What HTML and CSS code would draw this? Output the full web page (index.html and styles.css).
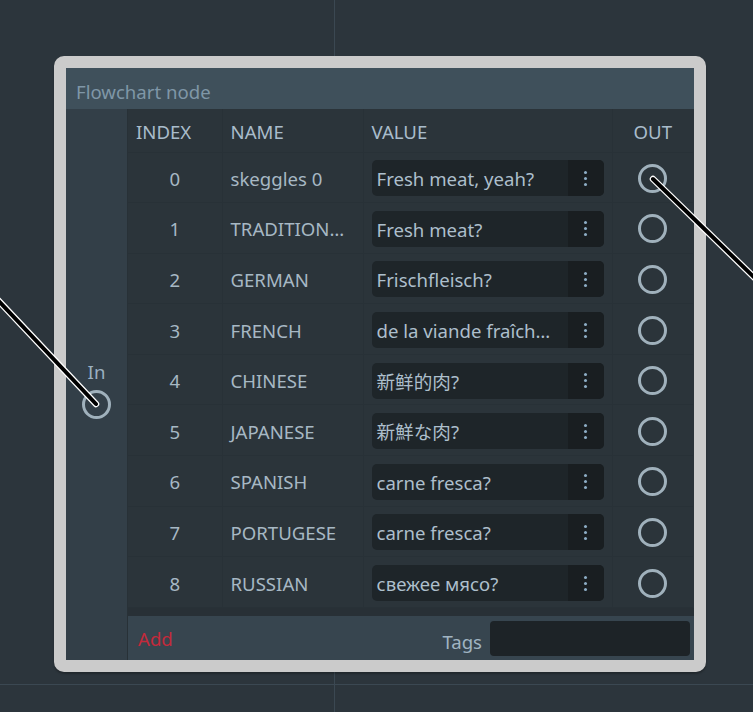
FILE: index.html
```html
<!DOCTYPE html>
<html lang="en">
<head>
  <meta charset="UTF-8">
  <title>Flowchart node</title>
  <link rel="stylesheet" href="styles.css">
</head>
<body>
<div class="canvas">

  <!-- Node -->
  <div class="node">
    <div class="node-title">Flowchart node</div>
    <div class="node-body">
      <div class="inputs">
        <div class="port-label">In</div>
        <div class="port"></div>
      </div>
      <div class="outputs">
        <table class="rows">
          <colgroup>
            <col class="c-index"><col class="c-name"><col class="c-value"><col class="c-out">
          </colgroup>
          <thead>
            <tr><th>INDEX</th><th>NAME</th><th>VALUE</th><th class="out">OUT</th></tr>
          </thead>
          <tbody>
            <tr><td class="idx">0</td><td class="name">skeggles 0</td><td><div class="value"><span>Fresh meat, yeah?</span><div class="dots"><i></i><i></i><i></i></div></div></td><td class="out"><div class="port"></div></td></tr>
            <tr><td class="idx">1</td><td class="name">TRADITIONAL CHINESE</td><td><div class="value"><span>Fresh meat?</span><div class="dots"><i></i><i></i><i></i></div></div></td><td class="out"><div class="port"></div></td></tr>
            <tr><td class="idx">2</td><td class="name">GERMAN</td><td><div class="value"><span>Frischfleisch?</span><div class="dots"><i></i><i></i><i></i></div></div></td><td class="out"><div class="port"></div></td></tr>
            <tr><td class="idx">3</td><td class="name">FRENCH</td><td><div class="value"><span>de la viande fraîche?</span><div class="dots"><i></i><i></i><i></i></div></div></td><td class="out"><div class="port"></div></td></tr>
            <tr><td class="idx">4</td><td class="name">CHINESE</td><td><div class="value"><span class="sc">新鲜的肉?</span><div class="dots"><i></i><i></i><i></i></div></div></td><td class="out"><div class="port"></div></td></tr>
            <tr><td class="idx">5</td><td class="name">JAPANESE</td><td><div class="value"><span class="jp">新鮮な肉?</span><div class="dots"><i></i><i></i><i></i></div></div></td><td class="out"><div class="port"></div></td></tr>
            <tr><td class="idx">6</td><td class="name">SPANISH</td><td><div class="value"><span>carne fresca?</span><div class="dots"><i></i><i></i><i></i></div></div></td><td class="out"><div class="port"></div></td></tr>
            <tr><td class="idx">7</td><td class="name">PORTUGESE</td><td><div class="value"><span>carne fresca?</span><div class="dots"><i></i><i></i><i></i></div></div></td><td class="out"><div class="port"></div></td></tr>
            <tr><td class="idx">8</td><td class="name">RUSSIAN</td><td><div class="value"><span>свежее мясо?</span><div class="dots"><i></i><i></i><i></i></div></div></td><td class="out"><div class="port"></div></td></tr>
          </tbody>
        </table>
        <div class="table-end"></div>
        <div class="footer">
          <span class="add">Add</span>
          <label class="tags">Tags <input type="text"></label>
        </div>
      </div>
    </div>
  </div>

  <!-- Wires -->
  <svg class="wires" width="753" height="712" viewBox="0 0 753 712">
    <g stroke="#fff" stroke-width="6.5" stroke-linecap="round">
      <line x1="-5" y1="297" x2="96" y2="404"/>
      <line x1="653" y1="179" x2="760" y2="283"/>
    </g>
    <g stroke="#000" stroke-width="4" stroke-linecap="round">
      <line x1="-5" y1="297" x2="96" y2="404"/>
      <line x1="653" y1="179" x2="760" y2="283"/>
    </g>
  </svg>
</div>
</body>
</html>
```

FILE: styles.css
```css
* { margin: 0; padding: 0; box-sizing: border-box; }
body {
  background: #2c353c;
  font-family: 'Noto Sans', 'Noto Sans CJK SC', sans-serif;
  font-size: 18.6px;
  color: #a7b8c4;
  overflow: hidden;
}

/* Canvas with grid */
.canvas {
  position: relative;
  width: 753px;
  height: 712px;
  background:
    linear-gradient(to right, transparent 334px, #3b4852 334px, #3b4852 335px, transparent 335px),
    linear-gradient(to bottom, transparent 684px, #3b4852 684px, #3b4852 685px, transparent 685px),
    #2c353c;
}

/* Node */
.node {
  position: absolute;
  left: 54px;
  top: 56px;
  width: 652px;
  height: 616px;
  border: 12px solid #cbcbcb;
  border-radius: 10px;
  background: #2b343a;
  display: flex;
  flex-direction: column;
  box-shadow: 0 2px 2px rgba(0, 0, 0, 0.25);
}
.node-title {
  height: 41px;
  background: #3f505b;
  color: #7f97a7;
  padding: 12px 10px 0;
  line-height: 24px;
}
.node-body {
  flex: 1;
  display: flex;
}
.inputs {
  width: 62px;
  background: #333f48;
  border-right: 1px solid #283137;
  display: flex;
  flex-direction: column;
  align-items: center;
  justify-content: center;
  gap: 6px;
  padding-top: 10px;
}
.port-label { line-height: 24px; color: #9bb0c0; }
.port {
  width: 29px;
  height: 29px;
  border: 3px solid #a0b1bc;
  border-radius: 50%;
}
.outputs {
  flex: 1;
  display: flex;
  flex-direction: column;
}

/* Table */
table.rows {
  width: 565px;
  table-layout: fixed;
  border-collapse: collapse;
}
.c-index { width: 94px; }
.c-name { width: 141px; }
.c-value { width: 249px; }
.c-out { width: 81px; }
th {
  height: 43px;
  padding: 2px 8px 0;
  font-weight: normal;
  text-align: left;
  border-right: 1px solid #283137;
  border-bottom: 1px solid #283137;
  color: #a9bccb;
}
th:last-child, td:last-child { border-right: none; }
td {
  height: 50.6px;
  padding: 2px 8px 0;
  border-right: 1px solid #283137;
  border-bottom: 1px solid #283137;
  white-space: nowrap;
  overflow: hidden;
  text-overflow: ellipsis;
}
td.idx { text-align: center; }
.out { text-align: center; padding-left: 0; padding-right: 0; }
td.out .port { margin: 0 auto; }

.value {
  display: flex;
  height: 36px;
  background: #1e2529;
  border-radius: 5px;
  overflow: hidden;
}
.value span {
  flex: 1;
  padding: 1px 14px 0 5px;
  line-height: 35px;
  white-space: nowrap;
  overflow: hidden;
  text-overflow: ellipsis;
  color: #adbfcc;
}
.value span.jp { font-family: 'Noto Sans', 'Noto Sans CJK JP', sans-serif; }
.dots {
  width: 36px;
  background: #191e21;
  display: flex;
  flex-direction: column;
  align-items: center;
  justify-content: center;
  gap: 3px;
}
.dots i {
  width: 3px;
  height: 3px;
  border-radius: 50%;
  background: #8eaec6;
}

.table-end {
  height: 8px;
  background: #283036;
}
.footer {
  flex: 1;
  background: #37454f;
  display: flex;
  align-items: center;
  justify-content: space-between;
  padding: 2px 4px 0 10px;
}
.add { color: #c42a3b; }
.tags {
  display: flex;
  align-items: center;
  gap: 8px;
  color: #a0b4c2;
  padding-top: 6px;
}
.tags input {
  width: 200px;
  height: 35px;
  margin-top: -6px;
  background: #1d2327;
  border: none;
  border-radius: 4px;
  outline: none;
}

/* Wires overlay */
.wires {
  position: absolute;
  left: 0;
  top: 0;
  pointer-events: none;
}
```
